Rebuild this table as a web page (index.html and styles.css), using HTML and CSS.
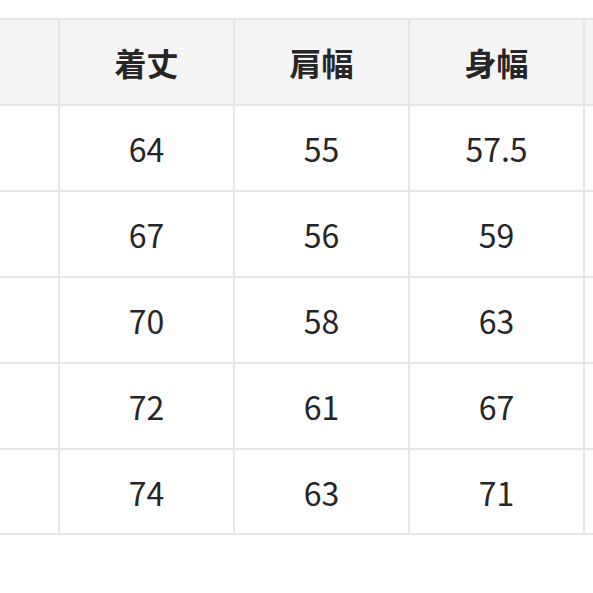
FILE: index.html
```html
<!DOCTYPE html>
<html lang="ja">
<head>
<meta charset="utf-8">
<link rel="stylesheet" href="styles.css">
</head>
<body>
<div class="wrap">
<table class="size-table">
  <thead>
    <tr><th class="c0"></th><th>着丈</th><th>肩幅</th><th>身幅</th><th class="cl"></th></tr>
  </thead>
  <tbody>
    <tr><td class="c0"></td><td>64</td><td>55</td><td>57.5</td><td class="cl"></td></tr>
    <tr><td class="c0"></td><td>67</td><td>56</td><td>59</td><td class="cl"></td></tr>
    <tr><td class="c0"></td><td>70</td><td>58</td><td>63</td><td class="cl"></td></tr>
    <tr><td class="c0"></td><td>72</td><td>61</td><td>67</td><td class="cl"></td></tr>
    <tr><td class="c0"></td><td>74</td><td>63</td><td>71</td><td class="cl"></td></tr>
  </tbody>
</table>
</div>
</body>
</html>
```
FILE: styles.css
```css
html, body {
  margin: 0;
  padding: 0;
  background: #ffffff;
}
.wrap {
  width: 593px;
  height: 593px;
  overflow: hidden;
  padding-top: 18px;
  box-sizing: border-box;
}
.size-table {
  border-collapse: collapse;
  table-layout: fixed;
  width: 660px;
  font-family: "Noto Sans CJK JP", sans-serif;
  color: #262626;
}
.size-table th,
.size-table td {
  border: 2px solid #e6e6e6;
  width: 175px;
  padding: 0;
  text-align: center;
  vertical-align: middle;
  box-sizing: border-box;
}
.size-table th {
  height: 86px;
  background: #f5f5f5;
  font-weight: 700;
  font-size: 32px;
}
.size-table td {
  height: 86px;
  font-size: 32px;
  font-weight: 400;
}
.size-table tbody tr:last-child td {
  height: 85px;
}
.size-table .c0 {
  width: 59px;
  border-left: none;
}
.size-table .cl {
  width: 80px;
}
```
